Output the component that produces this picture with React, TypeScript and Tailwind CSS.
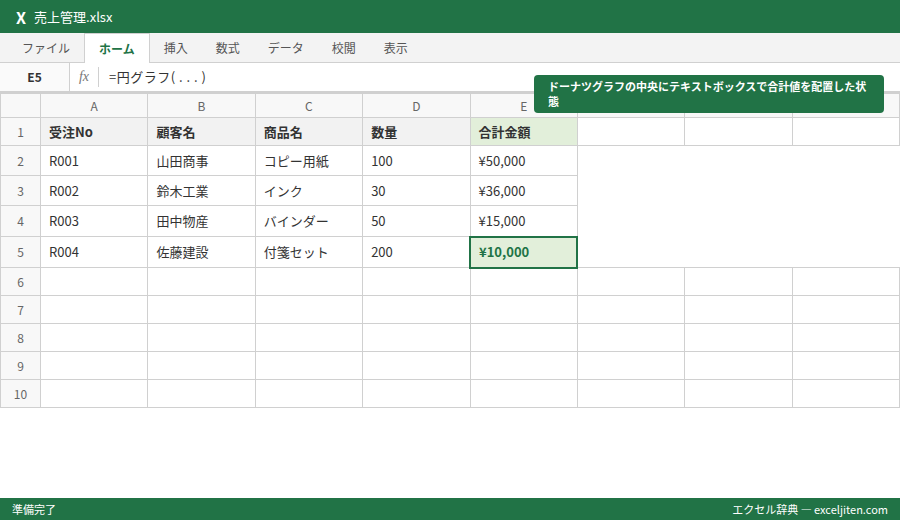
const tabs = ["ファイル", "ホーム", "挿入", "数式", "データ", "校閲", "表示"];
const cols = ["A", "B", "C", "D", "E", "F", "G", "H"];
const heads = ["受注No", "顧客名", "商品名", "数量", "合計金額"];
const rows = [
  ["R001", "山田商事", "コピー用紙", "100", "¥50,000"],
  ["R002", "鈴木工業", "インク", "30", "¥36,000"],
  ["R003", "田中物産", "バインダー", "50", "¥15,000"],
  ["R004", "佐藤建設", "付箋セット", "200", "¥10,000"],
];
const rowHeights = ["h-[30px]", "h-[30px]", "h-[31px]", "h-[31px]"];

const cell = "border border-[#d0d0d0] px-2 text-left align-middle text-[13px] text-[#333333] overflow-hidden whitespace-nowrap";
const rowHead = "border border-[#d0d0d0] bg-[#f8f8f8] text-center align-middle text-xs text-[#666666] font-normal";

export default function App() {
  return (
    <div className="relative flex h-[520px] w-[900px] flex-col overflow-hidden bg-white font-['Noto_Sans_CJK_JP','Noto_Sans',sans-serif]">
      <div className="flex h-[33px] items-center gap-2 bg-[#217346] px-4 text-white">
        <span className="text-base font-bold">X</span>
        <span className="text-[13px]">売上管理.xlsx</span>
      </div>

      <div className="flex h-[30px] items-end border-b border-[#d0d0d0] bg-[#f3f3f3] pl-2">
        {tabs.map((tab) =>
          tab === "ホーム" ? (
            <div
              key={tab}
              className="relative -mb-px flex h-[30px] items-center border-x border-t border-[#d0d0d0] bg-white px-3.5 pt-px text-xs font-bold text-[#217346]"
            >
              {tab}
            </div>
          ) : (
            <div key={tab} className="flex h-[29px] items-center px-3.5 text-xs text-[#555555]">
              {tab}
            </div>
          ),
        )}
      </div>

      <div className="flex h-[30px] items-center border-b-2 border-[#d0d0d0] bg-white">
        <div className="flex h-[28px] w-[70px] items-center justify-center border-r border-[#d0d0d0] bg-[#fafafa] text-xs font-bold text-[#333333]">
          E5
        </div>
        <div className="flex h-5 w-[29px] items-center justify-center border-r border-[#d0d0d0] font-['Liberation_Serif',serif] text-sm italic text-[#777777]">
          fx
        </div>
        <div className="pl-2.5 text-[13px] tracking-[0.5px] text-[#333333]">=円グラフ( . . . )</div>
      </div>

      <table className="w-[900px] table-fixed border-collapse">
        <colgroup>
          <col className="w-10" />
        </colgroup>
        <thead>
          <tr className="h-6">
            <th className={rowHead}></th>
            {cols.map((c) => (
              <th key={c} className={rowHead}>
                {c}
              </th>
            ))}
          </tr>
        </thead>
        <tbody>
          <tr className="h-[28px]">
            <td className={rowHead}>1</td>
            {heads.map((h, i) => (
              <td
                key={h}
                className={`${cell} text-xs font-bold ${i === 4 ? "bg-[#e2efda]" : "bg-[#f2f2f2]"}`}
              >
                {h}
              </td>
            ))}
            <td className={cell}></td>
            <td className={cell}></td>
            <td className={cell}></td>
          </tr>
          {rows.map((row, r) => (
            <tr key={row[0]} className={rowHeights[r]}>
              <td className={rowHead}>{r + 2}</td>
              {row.map((v, i) =>
                r === 3 && i === 4 ? (
                  <td
                    key={i}
                    className="border-2 border-[#217346] bg-[#e2efda] px-2 text-left align-middle text-[13px] font-bold text-[#217346]"
                  >
                    {v}
                  </td>
                ) : (
                  <td key={i} className={cell}>
                    {v}
                  </td>
                ),
              )}
            </tr>
          ))}
          {[6, 7, 8, 9, 10].map((n) => (
            <tr key={n} className="h-[28px]">
              <td className={rowHead}>{n}</td>
              {cols.map((c) => (
                <td key={c} className={cell}></td>
              ))}
            </tr>
          ))}
        </tbody>
      </table>

      <div className="absolute left-[534px] top-[75px] w-[350px] rounded bg-[#217346] px-3.5 py-1 text-[11px] leading-[15px] font-bold text-white">
        ドーナツグラフの中央にテキストボックスで合計値を配置した状態
      </div>

      <div className="mt-auto flex h-[22px] items-center justify-between bg-[#217346] px-3 text-[11px] text-white">
        <span>準備完了</span>
        <span>エクセル辞典 ― exceljiten.com</span>
      </div>
    </div>
  );
}
